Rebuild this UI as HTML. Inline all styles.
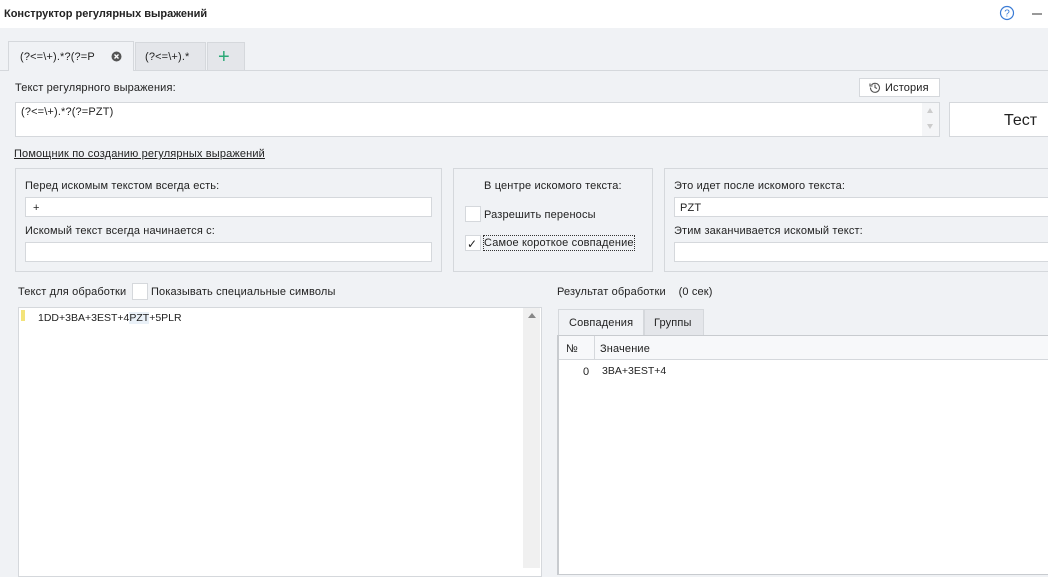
<!DOCTYPE html>
<html><head><meta charset="utf-8"><style>
*{box-sizing:border-box;margin:0;padding:0}
body{width:1048px;height:564px;overflow:hidden;background:#f0f2f5;font-family:"Liberation Sans","DejaVu Sans",sans-serif;font-size:11px;color:#222;position:relative}
.a{position:absolute}
.w{background:#fff;border:1px solid #d5d8dc}
.t{white-space:nowrap;margin-top:1px;letter-spacing:0.15px}
.gb{border:1px solid #d5d8dc}
</style></head><body>
<div class="a" style="left:0;top:0;width:1048px;height:28px;background:#fff"></div>
<div class="a t" style="left:4px;top:7px;font-weight:bold;font-size:11px;letter-spacing:0">Конструктор регулярных выражений</div>
<svg class="a" style="left:999px;top:5px" width="16" height="16"><circle cx="8" cy="8" r="6.5" fill="none" stroke="#3a7bd5" stroke-width="1.2"/><text x="8" y="11.5" font-size="10" text-anchor="middle" fill="#3a7bd5" font-family="Liberation Sans">?</text></svg>
<div class="a" style="left:1032px;top:13px;width:10px;height:1.5px;background:#999"></div>
<div class="a" style="left:0;top:70px;width:1048px;height:1px;background:#d5d8dc"></div>
<div class="a" style="left:8px;top:41px;width:126px;height:30px;background:#f0f2f5;border:1px solid #d5d8dc;border-bottom:none"></div>
<div class="a t" style="left:20px;top:50px">(?&lt;=\+).*?(?=P</div>
<svg class="a" style="left:111px;top:51px" width="11" height="11"><circle cx="5.5" cy="5.5" r="5" fill="#555"/><path d="M3.5 3.5L7.5 7.5M7.5 3.5L3.5 7.5" stroke="#fff" stroke-width="1.4"/></svg>
<div class="a" style="left:135px;top:42px;width:71px;height:28px;background:#e4e6ea;border:1px solid #d5d8dc;border-bottom:none"></div>
<div class="a t" style="left:145px;top:50px">(?&lt;=\+).*</div>
<div class="a" style="left:207px;top:42px;width:38px;height:28px;background:#e4e6ea;border:1px solid #d5d8dc;border-bottom:none"></div>
<div class="a t" style="left:218px;top:45px;font-size:20px;color:#2aa876;line-height:22px">+</div>
<div class="a t" style="left:15px;top:81px">Текст регулярного выражения:</div>
<div class="a w" style="left:859px;top:78px;width:81px;height:19px"></div>
<svg class="a" style="left:869px;top:81px" width="12" height="12"><path d="M2.5 4A4.5 4.5 0 1 1 1.5 6.5" fill="none" stroke="#555" stroke-width="1.1"/><path d="M1 2.5V5H3.5" fill="none" stroke="#555" stroke-width="1.1"/><path d="M6 3.5V6.5L8 7.5" fill="none" stroke="#555" stroke-width="1.1"/></svg>
<div class="a t" style="left:885px;top:81px">История</div>
<div class="a w" style="left:15px;top:102px;width:925px;height:35px"></div>
<div class="a" style="left:922px;top:103px;width:17px;height:33px;background:#f4f5f7"></div>
<div class="a" style="left:927px;top:108px;border:3.5px solid transparent;border-bottom:5px solid #ccc;border-top:none"></div>
<div class="a" style="left:927px;top:124px;border:3.5px solid transparent;border-top:5px solid #ccc;border-bottom:none"></div>
<div class="a t" style="left:21px;top:105px">(?&lt;=\+).*?(?=PZT)</div>
<div class="a w" style="left:949px;top:102px;width:110px;height:35px"></div>
<div class="a t" style="left:1004px;top:111px;font-size:16px;letter-spacing:0">Тест</div>
<div class="a t" style="left:14px;top:147px;text-decoration:underline">Помощник по созданию регулярных выражений</div>
<div class="a gb" style="left:15px;top:168px;width:427px;height:104px"></div>
<div class="a t" style="left:25px;top:179px">Перед искомым текстом всегда есть:</div>
<div class="a w" style="left:25px;top:197px;width:407px;height:20px"></div>
<div class="a t" style="left:33px;top:201px">+</div>
<div class="a t" style="left:25px;top:224px">Искомый текст всегда начинается с:</div>
<div class="a w" style="left:25px;top:242px;width:407px;height:20px"></div>
<div class="a gb" style="left:453px;top:168px;width:200px;height:104px"></div>
<div class="a t" style="left:484px;top:179px">В центре искомого текста:</div>
<div class="a w" style="left:465px;top:206px;width:16px;height:16px"></div>
<div class="a t" style="left:484px;top:208px">Разрешить переносы</div>
<div class="a w" style="left:465px;top:235px;width:16px;height:16px"></div>
<div class="a t" style="left:467px;top:236px;font-size:12px">✓</div>
<div class="a t" style="left:483px;top:234px;border:1px dotted #333;padding:1px 0">Самое короткое совпадение</div>
<div class="a gb" style="left:664px;top:168px;width:400px;height:104px"></div>
<div class="a t" style="left:674px;top:179px">Это идет после искомого текста:</div>
<div class="a w" style="left:674px;top:197px;width:390px;height:20px"></div>
<div class="a t" style="left:680px;top:201px">PZT</div>
<div class="a t" style="left:674px;top:224px">Этим заканчивается искомый текст:</div>
<div class="a w" style="left:674px;top:242px;width:390px;height:20px"></div>
<div class="a t" style="left:18px;top:285px">Текст для обработки</div>
<div class="a w" style="left:132px;top:283px;width:16px;height:17px"></div>
<div class="a t" style="left:151px;top:285px">Показывать специальные символы</div>
<div class="a w" style="left:18px;top:307px;width:524px;height:270px"></div>
<div class="a" style="left:523px;top:308px;width:17px;height:260px;background:#f0f0f0"></div>
<div class="a" style="left:528px;top:313px;border:4px solid transparent;border-bottom:5px solid #888;border-top:none"></div>
<div class="a" style="left:21px;top:310px;width:4px;height:11px;background:#f3e37a"></div>
<div class="a t" style="left:38px;top:311px;font-size:10.5px;letter-spacing:0">1DD+3BA+3EST+4<span style="background:#eaf1f8">PZT</span>+5PLR</div>
<div class="a t" style="left:557px;top:285px">Результат обработки&nbsp;&nbsp;&nbsp;&nbsp;(0 сек)</div>
<div class="a" style="left:558px;top:309px;width:86px;height:27px;background:#f0f2f5;border:1px solid #d5d8dc;border-bottom:none"></div>
<div class="a t" style="left:569px;top:316px">Совпадения</div>
<div class="a" style="left:644px;top:309px;width:60px;height:26px;background:#e4e6ea;border:1px solid #d5d8dc;border-bottom:none"></div>
<div class="a t" style="left:654px;top:316px">Группы</div>
<div class="a" style="left:557px;top:335px;width:500px;height:240px;background:#fff;border:1px solid #c8cbcf;border-left:2px solid #c8cbcf"></div>
<div class="a" style="left:559px;top:336px;width:500px;height:24px;background:#f7f8fa;border-bottom:1px solid #d5d8dc"></div>
<div class="a" style="left:594px;top:336px;width:1px;height:24px;background:#d5d8dc"></div>
<div class="a t" style="left:566px;top:342px">№</div>
<div class="a t" style="left:600px;top:342px">Значение</div>
<div class="a t" style="left:583px;top:365px">0</div>
<div class="a t" style="left:602px;top:364px;font-size:10.5px;letter-spacing:0">3BA+3EST+4</div>
</body></html>
